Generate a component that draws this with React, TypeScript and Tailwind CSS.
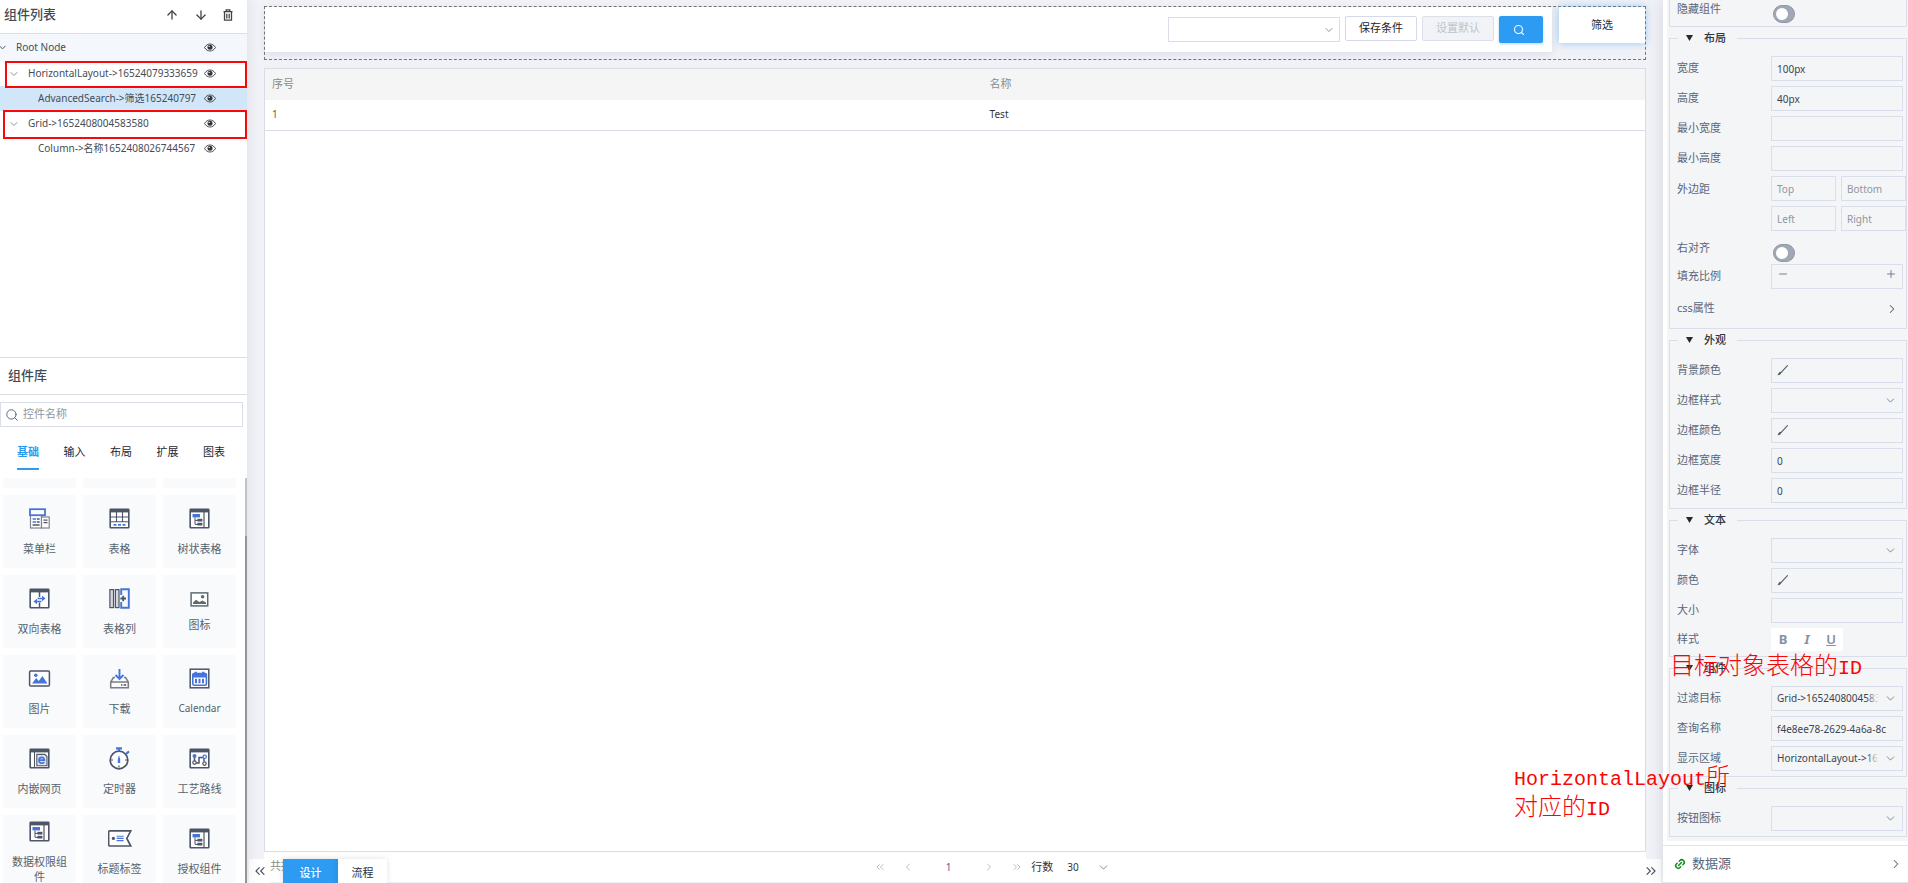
import type { ReactNode } from "react";
import { ArrowDown, ArrowUp, ChevronDown, ChevronLeft, ChevronRight, ChevronsLeft, ChevronsRight, Link2, Minus, Plus, Search } from "lucide-react";

const DARK = "#4d5566";
const BLUE = "#4674dd";

const EyeIcon = () => (
  <svg width="12" height="9" viewBox="0 0 12 9" className="shrink-0">
    <path d="M0.5 4.5C2 2 4 1 6 1s4 1 5.5 3.5C10 7 8 8 6 8S2 7 0.5 4.5Z" fill="none" stroke="#4a4e53" strokeWidth="1" />
    <circle cx="6" cy="4.2" r="2.5" fill="#303438" />
    <circle cx="5.2" cy="3.4" r="0.7" fill="#fff" />
  </svg>
);

const TrashIcon = () => (
  <svg width="10" height="12" viewBox="0 0 10 12" fill="none" stroke="#3f444a" strokeWidth="1.3">
    <path d="M0.5 2.7h9M3.2 2.5V0.9h3.6v1.6M1.5 3v8.2h7V3M3.8 4.8v4.6M6.2 4.8v4.6" />
  </svg>
);

const BrushIcon = () => (
  <svg width="11" height="11" viewBox="0 0 11 11" className="absolute left-[6px] top-[7px]">
    <path d="M10.4 0.6 4.2 7.4" stroke="#5b6471" strokeWidth="1.2" strokeLinecap="round" />
    <path d="M4.4 7.4C4.2 9.2 2.4 10.4 0.4 10.2 1.4 9.4 1.4 7.6 3.2 6.7Z" fill="#4f5866" />
  </svg>
);

const Frame = ({ children }: { children?: ReactNode }) => (
  <>
    <rect x="1.2" y="1.2" width="18.6" height="18.6" rx="0.6" fill="#fff" stroke={DARK} strokeWidth="1.6" />
    <rect x="1" y="1" width="19" height="3.4" fill={DARK} />
    {children}
  </>
);

const TreeShape = () => (
  <Frame>
    <path d="M15 4v16" stroke={DARK} strokeWidth="1.2" />
    <rect x="3.5" y="6" width="7.5" height="3.4" fill={BLUE} />
    <path d="M6 9.4v7h3M6 12.4h3" stroke={DARK} fill="none" />
    <rect x="8.4" y="10.8" width="5" height="2.7" fill={DARK} />
    <rect x="8.4" y="14.8" width="5" height="2.7" fill={DARK} />
  </Frame>
);

const shapes: Record<string, ReactNode> = {
  menu: (
    <>
      <rect x="1.5" y="7" width="11" height="13" fill="#fff" stroke="#7d8490" strokeWidth="1.2" />
      <rect x="12.5" y="9" width="7.7" height="11" fill="#fff" stroke="#7d8490" strokeWidth="1.2" />
      <rect x="1" y="1.2" width="15" height="6" fill="#fff" stroke={BLUE} strokeWidth="1.8" />
      <path d="M3.6 11h3.6M3.6 14h3.6" stroke={BLUE} strokeWidth="1.6" />
      <path d="M8 11h2.6M8 14h2.6M3.6 17h7M14.5 12.2h4M14.5 14.6h4" stroke={DARK} strokeWidth="1.3" />
    </>
  ),
  grid: (
    <Frame>
      <path d="M1 9h19M1 13.8h19M7.5 4v9.8M13.5 4v9.8" stroke={DARK} strokeWidth="1.1" />
      <path d="M4.5 16.8h3M9 16.8h3M13.5 16.8h3" stroke={BLUE} strokeWidth="1.8" />
    </Frame>
  ),
  tree: <TreeShape />,
  twoWay: (
    <Frame>
      <path d="M10.5 4v5M10.5 14.5v5.5" stroke={DARK} strokeWidth="1.5" />
      <path d="M8.5 10.6H14M7 13.4h5.5" stroke={BLUE} strokeWidth="1.5" fill="none" />
      <path d="M13 7.8 16.6 10.6 13 13.2ZM8 10.8 4.4 13.4 8 16.2Z" fill={BLUE} />
    </Frame>
  ),
  column: (
    <>
      <rect x="0.9" y="1.6" width="3.6" height="18" fill="#d5d8dd" stroke={DARK} strokeWidth="1.2" />
      <rect x="6.4" y="1.6" width="3.6" height="18" fill="#d5d8dd" stroke={DARK} strokeWidth="1.2" />
      <path d="M12.2 7V1.2h7.6v18.6h-7.6V14" fill="none" stroke={BLUE} strokeWidth="1.9" />
      <path d="M11.4 10.5h5.6M14.2 7.7v5.6" stroke={DARK} strokeWidth="1.8" />
    </>
  ),
  picture: (
    <>
      <rect x="0.6" y="3" width="19.8" height="15" rx="1" fill="#fff" stroke={DARK} strokeWidth="1.5" />
      <circle cx="6.8" cy="7.2" r="1.8" fill={BLUE} />
      <path d="M3 15.6 7.2 10l2.6 3 3.6-5 5 7.6Z" fill={BLUE} />
    </>
  ),
  download: (
    <>
      <path d="M10.5 1v9.5M6.5 7l4 4 4-4" stroke={BLUE} strokeWidth="1.9" fill="none" />
      <path d="M6 9.6H4.4L1.7 14v5.7h17.6V14l-2.7-4.4H15M1.7 14h17.6" stroke="#777e8b" strokeWidth="1.5" fill="none" />
      <path d="M12 17h1.4M14.6 17h2.6" stroke={DARK} strokeWidth="1.4" />
    </>
  ),
  calendar: (
    <>
      <rect x="1.2" y="1.2" width="18.6" height="18.6" fill="#fff" stroke={DARK} strokeWidth="1.5" />
      <rect x="3.8" y="5.6" width="13.6" height="11.6" rx="1.4" fill="none" stroke={BLUE} strokeWidth="1.6" />
      <path d="M3.6 5.4h14v4h-14ZM5.5 3.8h2.4v3H5.5ZM13.1 3.8h2.4v3h-2.4Z" fill={BLUE} />
      <path d="M7 10.8v4.4M10.5 10.8v4.4M14 10.8v4.4" stroke={BLUE} strokeWidth="2" />
    </>
  ),
  web: (
    <Frame>
      <path d="M5.5 4v16" stroke={DARK} strokeWidth="1.1" />
      <path d="M7.8 6.4h8l2.2 2.2v9.2H7.8Z" fill="#e2e4ea" stroke={DARK} strokeWidth="1.1" />
      <path d="M10.2 12.2h5.2c0-4-5.4-3.6-5.4 0.2 0 3.2 3.8 3.4 5.2 1.5" fill="none" stroke={BLUE} strokeWidth="1.7" />
    </Frame>
  ),
  timer: (
    <>
      <circle cx="10" cy="12" r="8.8" fill="#fff" stroke={DARK} strokeWidth="1.7" />
      <path d="M7 0.4h6M10 0.6v2.6M17 6l3-2.6" stroke={BLUE} strokeWidth="2.2" />
      <path d="M10 7l1.2 4.4V15H8.8v-3.6Z" fill={BLUE} />
      <path d="M2 12h2M16 12h2M10 17.6v2" stroke={DARK} strokeWidth="1.2" />
    </>
  ),
  route: (
    <Frame>
      <path d="M5.5 9v4M7 15h3V9.5h5v4" stroke={DARK} strokeWidth="1.5" fill="none" />
      <circle cx="5.5" cy="8" r="2" fill={BLUE} />
      <circle cx="15.7" cy="8.8" r="1.7" fill="#fff" stroke={BLUE} strokeWidth="1.2" />
      <circle cx="5.5" cy="14.6" r="1.7" fill="#fff" stroke={DARK} strokeWidth="1.2" />
      <circle cx="15.5" cy="15.6" r="1.7" fill="#fff" stroke={DARK} strokeWidth="1.2" />
    </Frame>
  ),
  tag: (
    <>
      <path d="M21.8 2.8H1Q-0.4 2.8-0.4 4.2v12.4q0 1.4 1.4 1.4h20.8l-4-7.6Z" fill="#fff" stroke={DARK} strokeWidth="1.7" />
      <circle cx="4.4" cy="10.4" r="1.6" fill={DARK} />
      <path d="M7.6 8.2h7M7.6 10.4h7M7.6 12.6h7" stroke={BLUE} strokeWidth="1.1" />
    </>
  ),
};

const ShapeIcon = ({ name }: { name: string }) =>
  name === "image" ? (
    <svg width="19" height="15" viewBox="0 0 19 15" className="shrink-0">
      <rect x="1.1" y="0.9" width="16.6" height="13" fill="#fff" stroke="#5d6b73" strokeWidth="1.5" />
      <circle cx="12.6" cy="4.8" r="1.8" fill="#5d6b73" />
      <path d="M3 12v-1.6l3-2.6 3.4 2.2 3-1.4 3.6 1.8V12Z" fill="#5d6b73" />
    </svg>
  ) : (
    <svg width="24" height="24" viewBox="-1 -1 24 24" className="shrink-0">
      {shapes[name]}
    </svg>
  );

const tiles = [
  { icon: "menu", label: "菜单栏" },
  { icon: "grid", label: "表格" },
  { icon: "tree", label: "树状表格" },
  { icon: "twoWay", label: "双向表格" },
  { icon: "column", label: "表格列" },
  { icon: "image", label: "图标" },
  { icon: "picture", label: "图片" },
  { icon: "download", label: "下载" },
  { icon: "calendar", label: "Calendar" },
  { icon: "web", label: "内嵌网页" },
  { icon: "timer", label: "定时器" },
  { icon: "route", label: "工艺路线" },
  { icon: "tree", label: "数据权限组件" },
  { icon: "tag", label: "标题标签" },
  { icon: "tree", label: "授权组件" },
];

const tabs = ["基础", "输入", "布局", "扩展", "图表"];

function TreeRow({ className, children }: { className: string; children: ReactNode }) {
  return (
    <li className={`flex items-center pr-[31px] text-[10px] text-[#454c57] ${className}`}>
      {children}
      <button aria-label="显示" className="ml-auto pl-1"><EyeIcon /></button>
    </li>
  );
}

function LeftPanel() {
  return (
    <aside className="z-10 flex w-[247px] shrink-0 flex-col bg-white shadow-[0_0_12px_rgba(40,50,90,0.10)]">
      <section className="flex h-[358px] shrink-0 flex-col border-b border-[#dcdee3]">
        <header className="flex h-[34px] shrink-0 items-center border-b border-[#dcdee3] pb-1 pl-1 pr-[14px] text-[#3a3f45]">
          <h2 className="text-[13px] font-medium text-[#3f4b57]">组件列表</h2>
          <div className="ml-auto flex items-center gap-[15px]">
            <button aria-label="上移"><ArrowUp size={14} strokeWidth={2.2} /></button>
            <button aria-label="下移"><ArrowDown size={14} strokeWidth={2.2} /></button>
            <button aria-label="删除"><TrashIcon /></button>
          </div>
        </header>
        <ul>
          <TreeRow className="h-[27px] bg-[#f4f8fd]">
            <ChevronDown size={11} className="-ml-[3px] mr-2 shrink-0" />
            <span>Root Node</span>
          </TreeRow>
          <TreeRow className="h-[25px] pl-2">
            <ChevronDown size={12} className="mr-2 shrink-0 text-[#8b93a5]" />
            <span className="overflow-hidden whitespace-nowrap">HorizontalLayout-&gt;16524079333659</span>
          </TreeRow>
          <TreeRow className="h-[25px] bg-[#d1e6f9] pl-[38px]">
            <span className="overflow-hidden whitespace-nowrap">AdvancedSearch-&gt;筛选165240797</span>
          </TreeRow>
          <TreeRow className="h-[25px] pl-2">
            <ChevronDown size={12} className="mr-2 shrink-0 text-[#8b93a5]" />
            <span>Grid-&gt;1652408004583580</span>
          </TreeRow>
          <TreeRow className="h-[25px] pl-[38px]">
            <span className="overflow-hidden whitespace-nowrap">Column-&gt;名称1652408026744567</span>
          </TreeRow>
        </ul>
      </section>

      <h2 className="flex h-[37px] shrink-0 items-center border-b border-[#dcdee3] pl-2 text-[13px] font-medium text-[#3f4b57]">组件库</h2>
      <label className="mr-1 mt-[7px] flex h-[25px] shrink-0 items-center gap-1 border border-[#d9deea] pl-1">
        <Search size={14} strokeWidth={1.6} className="text-[#53606e]" />
        <input placeholder="控件名称" aria-label="控件名称" className="min-w-0 flex-1 text-[11px] outline-none placeholder:text-[#8f959e]" />
      </label>
      <nav className="mt-2 flex h-[35px] shrink-0 justify-between pl-[17px] pr-[22px]">
        {tabs.map((t, i) => (
          <button key={t} className={`border-b-2 pt-px text-[11px] ${i === 0 ? "border-[#2c9bf1] font-bold text-[#2c9bf1]" : "border-transparent text-[#1e2530]"}`}>
            {t}
          </button>
        ))}
      </nav>

      <div className="mt-2 flex min-h-0 flex-1 overflow-hidden">
        <div className="flex-1 pl-[3px]">
          <div className="grid grid-cols-[repeat(3,73px)] gap-[7px]">
            {[0, 1, 2].map((i) => <div key={i} className="h-[10px] bg-[#f8fafc]" />)}
            {tiles.map((t) => (
              <button key={t.label} className={`flex h-[73px] flex-col items-center justify-center gap-[10px] bg-[#f8fafc] px-2 leading-[15px] text-[#56626d] ${t.label === "Calendar" ? "text-[10px]" : "text-[11px]"}`}>
                <ShapeIcon name={t.icon} />
                <span>{t.label}</span>
              </button>
            ))}
          </div>
        </div>
        <div className="w-[2px] bg-[#c4c4c4] pt-[58px]">
          <div className="h-full bg-[#969696]" />
        </div>
      </div>
    </aside>
  );
}

function Canvas() {
  return (
    <main className="relative flex min-w-0 flex-1 flex-col bg-[#f1f2f7] pb-px pl-[17px] pr-[17px] pt-[6px]">
      <div className="flex h-[54px] shrink-0 items-start gap-[7px] border border-dashed border-[#777]">
        <div className="flex h-[45px] flex-1 items-start justify-end gap-[5px] bg-white pr-[9px] pt-[9px] text-[11px] shadow-[0_2px_8px_rgba(40,50,90,0.10)]">
          <div className="relative mt-px w-[172px]">
            <select aria-label="条件" className="h-[25px] w-full appearance-none border border-[#d9deea] bg-white" />
            <ChevronDown size={12} strokeWidth={1.8} className="pointer-events-none absolute right-[5px] top-[7px] text-[#7f8799]" />
          </div>
          <button className="h-[25px] w-[72px] rounded-[2px] border border-[#d5daea] bg-white text-[#1e2228]">保存条件</button>
          <button disabled className="h-[25px] w-[72px] rounded-[2px] border border-[#dcdfea] bg-[#f2f3f6] text-[#bcc2cc]">设置默认</button>
          <button aria-label="搜索" className="flex h-[27px] w-11 items-center justify-center rounded-[2px] bg-[#2c9bf1] pr-1 text-white shadow-[0_1px_3px_rgba(44,155,241,0.4)]">
            <Search size={12} strokeWidth={2.2} />
          </button>
        </div>
        <button className="h-9 w-[86px] bg-white text-[11px] text-[#2a2e35] shadow-[0_0_8px_rgba(44,155,241,0.5)]">筛选</button>
      </div>

      <div className="mt-2 min-h-0 flex-1 border border-[#dadce5] bg-white">
        <table className="w-full table-fixed text-left text-[11px]">
          <thead>
            <tr className="h-[31px] bg-[#f5f5f5] text-[#8c8c8c]">
              <th className="w-[52%] px-[7px] font-normal">序号</th>
              <th className="px-[7px] font-normal">名称</th>
            </tr>
          </thead>
          <tbody className="text-[10px]">
            <tr className="h-[30px] border-b border-[#dadce5] text-[#333]">
              <td className="px-[7px] text-[#6f6038]">1</td>
              <td className="px-[7px]">Test</td>
            </tr>
          </tbody>
        </table>
      </div>

      <footer className="relative flex h-[30px] shrink-0 items-center justify-center bg-white pl-[74px] text-[11px] text-[#333]">
        <span className="absolute left-[6px] top-[6px] text-[#8c8c8c]">共找</span>
        <div className="flex items-center text-[#b0b4bb]">
          <button aria-label="首页"><ChevronsLeft size={12} strokeWidth={1.8} /></button>
          <button aria-label="上一页" className="ml-4"><ChevronLeft size={12} strokeWidth={1.8} /></button>
          <span className="mx-8 text-[10px] text-[#6b4fa0]">1</span>
          <button aria-label="下一页"><ChevronRight size={12} strokeWidth={1.8} /></button>
          <button aria-label="末页" className="ml-4"><ChevronsRight size={12} strokeWidth={1.8} /></button>
        </div>
        <label className="ml-2 flex items-center gap-[14px]">
          行数
          <span className="relative flex items-center">
            <select className="w-[43px] appearance-none bg-transparent text-[10px]"><option>30</option></select>
            <ChevronDown size={13} strokeWidth={1.8} className="pointer-events-none absolute right-0 text-[#7b8290]" />
          </span>
        </label>
      </footer>

      <div className="absolute bottom-0 left-[2px] flex h-6 text-[11px]">
        <button aria-label="收起左栏" className="mr-[13px] flex w-[21px] items-center justify-center bg-white text-[#4f5866]"><ChevronsLeft size={16} strokeWidth={1.8} /></button>
        <button className="w-[55px] bg-[#2c9bf1] pt-1 font-medium text-white shadow-[0_0_6px_rgba(0,0,0,0.15)]">设计</button>
        <button className="w-[49px] bg-white pt-1 text-[#2a2e35] shadow-[0_0_6px_rgba(0,0,0,0.12)]">流程</button>
      </div>
      <button aria-label="收起右栏" className="absolute bottom-0 right-[2px] flex h-6 w-[21px] items-center justify-center bg-white text-[#4f5866]"><ChevronsRight size={16} strokeWidth={1.8} /></button>
    </main>
  );
}

const inputBox = "h-[25px] w-full min-w-0 border border-[#dadeea] bg-transparent px-[5px] text-[10px] text-[#3b4452] outline-none placeholder:text-[#8f96a3]";

function Group({ title, children }: { title: string; children: ReactNode }) {
  return (
    <fieldset className="mt-[3px] border border-[#dadeea] pb-[5px] pl-[7px] pr-[3px]">
      <legend className="ml-px flex h-4 w-[59px] items-center gap-[11px] pl-2 text-[11px] font-medium text-[#2d3645]">
        <svg width="7" height="6" viewBox="0 0 7 6"><path d="M0 0h7L3.5 6Z" fill="#26292e" /></svg>
        {title}
      </legend>
      <div className="flex flex-col gap-[5px] pt-[10px]">{children}</div>
    </fieldset>
  );
}

function Row({ label, children, className = "h-[25px] items-center" }: { label: string; children?: ReactNode; className?: string }) {
  return (
    <label className={`flex text-[11px] text-[#59657a] ${className}`}>
      <span className="w-[94px] shrink-0">{label}</span>
      {children}
    </label>
  );
}

function SwitchRow({ label }: { label: string }) {
  return (
    <Row label={label} className="h-[23px] items-start leading-[23px]">
      <input type="checkbox" role="switch" className="peer sr-only" />
      <span className="ml-[2px] mt-2 flex h-[18px] w-[22px] shrink-0 items-center rounded-full border border-[#8f98a8] bg-[#a0a8b6] pl-[2px]">
        <span className="h-3 w-3 rounded-full bg-white" />
      </span>
    </Row>
  );
}

function SelectBox({ value }: { value?: string }) {
  return (
    <span className="relative min-w-0 flex-1">
      <select className={`${inputBox} appearance-none pr-[23px]`}>{value && <option>{value}</option>}</select>
      {value && <span className="pointer-events-none absolute right-6 top-1 h-4 w-3 bg-linear-to-r from-transparent to-[#f4f5f7]" />}
      <ChevronDown size={13} strokeWidth={1.8} className="pointer-events-none absolute right-[6px] top-[6px] text-[#7b8698]" />
    </span>
  );
}

function ColorBox() {
  return (
    <span className="relative min-w-0 flex-1">
      <input className={inputBox} />
      <BrushIcon />
    </span>
  );
}

function RightPanel() {
  return (
    <aside className="z-10 flex w-[245px] shrink-0 flex-col bg-white shadow-[0_0_14px_rgba(40,50,90,0.14)]">
      <div className="mb-1 ml-1 min-h-0 flex-1 overflow-hidden bg-[#f4f5f7] pl-[2px] pr-px">
        <div className="-mt-[3px] border-x border-b border-[#dadeea] pb-[6px] pl-[7px] pr-[3px]">
          <SwitchRow label="隐藏组件" />
        </div>

        <Group title="布局">
          <Row label="宽度"><input className={inputBox} defaultValue="100px" /></Row>
          <Row label="高度"><input className={inputBox} defaultValue="40px" /></Row>
          <Row label="最小宽度"><input className={inputBox} /></Row>
          <Row label="最小高度"><input className={inputBox} /></Row>
          <div className="-mr-[3px] flex text-[11px] text-[#59657a]">
            <span className="w-[94px] shrink-0 leading-[25px]">外边距</span>
            <div className="grid flex-1 grid-cols-2 gap-[5px]">
              {["Top", "Bottom", "Left", "Right"].map((side) => (
                <input key={side} aria-label={side} placeholder={side} className={inputBox} />
              ))}
            </div>
          </div>
          <SwitchRow label="右对齐" />
          <div className="flex h-[25px] items-center text-[11px] text-[#59657a]">
            <span className="w-[94px] shrink-0">填充比例</span>
            <div className="flex h-[25px] flex-1 items-start justify-between border border-[#dadeea] px-[5px] pt-[3px] text-[#6b7587]">
              <button aria-label="减少"><Minus size={12} strokeWidth={1.8} /></button>
              <button aria-label="增加"><Plus size={12} strokeWidth={1.8} /></button>
            </div>
          </div>
          <button className="flex h-[29px] items-center justify-between pr-1 text-[11px] text-[#59657a]">
            css属性
            <ChevronRight size={14} strokeWidth={1.8} />
          </button>
        </Group>

        <Group title="外观">
          <Row label="背景颜色"><ColorBox /></Row>
          <Row label="边框样式"><SelectBox /></Row>
          <Row label="边框颜色"><ColorBox /></Row>
          <Row label="边框宽度"><input className={inputBox} defaultValue="0" /></Row>
          <Row label="边框半径"><input className={inputBox} defaultValue="0" /></Row>
        </Group>

        <Group title="文本">
          <Row label="字体"><SelectBox /></Row>
          <Row label="颜色"><ColorBox /></Row>
          <Row label="大小"><input className={inputBox} /></Row>
          <div className="flex h-[23px] items-center text-[11px] text-[#59657a]">
            <span className="w-[94px] shrink-0">样式</span>
            <div className="flex h-[23px] bg-white text-[13px] font-bold text-[#8790a0]">
              <button className="w-6">B</button>
              <button className="w-6 italic">I</button>
              <button className="w-6 font-semibold underline">U</button>
            </div>
          </div>
        </Group>

        <Group title="组件">
          <Row label="过滤目标"><SelectBox value="Grid->1652408004583580" /></Row>
          <Row label="查询名称">
            <span className="relative min-w-0 flex-1">
              <input className={inputBox} defaultValue="f4e8ee78-2629-4a6a-8c" />
              <span className="pointer-events-none absolute right-[6px] top-1 h-4 w-3 bg-linear-to-r from-transparent to-[#f4f5f7]" />
            </span>
          </Row>
          <Row label="显示区域"><SelectBox value="HorizontalLayout->16524079333659" /></Row>
        </Group>

        <Group title="图标">
          <Row label="按钮图标"><SelectBox /></Row>
        </Group>
      </div>
      <button className="flex h-[38px] shrink-0 items-center gap-[6px] border-y border-[#e3e5ec] pl-[11px] pr-[5px] text-[13px] text-[#59657a]">
        <Link2 size={12} strokeWidth={3} className="-rotate-45 text-[#148a1c]" />
        数据源
        <ChevronRight size={14} strokeWidth={1.8} className="ml-auto" />
      </button>
    </aside>
  );
}

// Red annotations drawn over the editor
function Notes() {
  return (
    <div className="pointer-events-none absolute inset-0 z-20 text-2xl leading-[30px] text-[#fa0505]">
      <div className="absolute left-[5px] top-[61px] h-[27px] w-[242px] border-2 border-[#f80808]" />
      <div className="absolute left-[3px] top-[110px] h-[29px] w-[244px] border-2 border-[#f80808]" />
      <p className="absolute right-[46px] top-[650px] whitespace-nowrap font-light">
        目标对象表格的<span className="font-[Liberation_Mono,monospace] text-xl leading-none">ID</span>
      </p>
      <p className="absolute right-[178px] top-[761px] whitespace-nowrap font-light">
        <span className="font-[Liberation_Mono,monospace] text-xl leading-none">HorizontalLayout</span>所<br />
        对应的<span className="font-[Liberation_Mono,monospace] text-xl leading-none">ID</span>
      </p>
    </div>
  );
}

export default function App() {
  return (
    <div className="relative flex h-screen min-h-[600px] overflow-hidden font-['Noto_Sans','Noto_Sans_CJK_SC',sans-serif]">
      <LeftPanel />
      <Canvas />
      <RightPanel />
      <Notes />
    </div>
  );
}
